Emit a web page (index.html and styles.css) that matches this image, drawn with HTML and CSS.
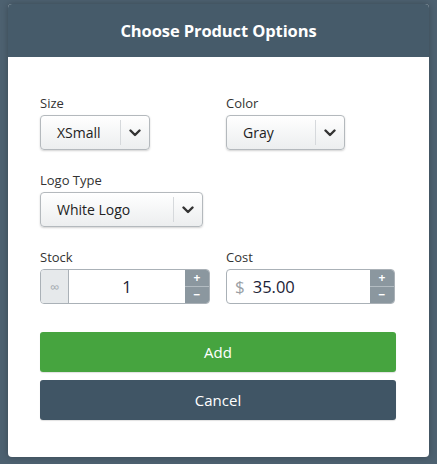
FILE: index.html
```html
<!DOCTYPE html>
<html>
<head>
<meta charset="utf-8">
<link rel="stylesheet" href="styles.css">
</head>
<body>
<div class="modal">
  <div class="modal-header">Choose Product Options</div>
  <div class="modal-body">
    <div class="row">
      <div class="field">
        <div class="label">Size</div>
        <div class="select w-size">
          <span class="select-text">XSmall</span>
          <span class="select-arrow"><svg width="12" height="8" viewBox="0 0 12 8"><polyline points="1.5,1.5 6,6 10.5,1.5" fill="none" stroke="#333" stroke-width="2.4" stroke-linecap="round" stroke-linejoin="round"/></svg></span>
        </div>
      </div>
      <div class="field">
        <div class="label">Color</div>
        <div class="select w-color">
          <span class="select-text">Gray</span>
          <span class="select-arrow"><svg width="12" height="8" viewBox="0 0 12 8"><polyline points="1.5,1.5 6,6 10.5,1.5" fill="none" stroke="#333" stroke-width="2.4" stroke-linecap="round" stroke-linejoin="round"/></svg></span>
        </div>
      </div>
    </div>
    <div class="row">
      <div class="field">
        <div class="label">Logo Type</div>
        <div class="select w-logo">
          <span class="select-text">White Logo</span>
          <span class="select-arrow"><svg width="12" height="8" viewBox="0 0 12 8"><polyline points="1.5,1.5 6,6 10.5,1.5" fill="none" stroke="#333" stroke-width="2.4" stroke-linecap="round" stroke-linejoin="round"/></svg></span>
        </div>
      </div>
    </div>
    <div class="row">
      <div class="field">
        <div class="label">Stock</div>
        <div class="numbox w-stock">
          <span class="addon">∞</span>
          <span class="num center">1</span>
          <span class="spin"><span class="spin-btn">+</span><span class="spin-btn">−</span></span>
        </div>
      </div>
      <div class="field">
        <div class="label">Cost</div>
        <div class="numbox w-cost">
          <span class="dollar">$</span>
          <span class="num">35.00</span>
          <span class="spin"><span class="spin-btn">+</span><span class="spin-btn">−</span></span>
        </div>
      </div>
    </div>
    <div class="actions">
      <div class="btn btn-add">Add</div>
      <div class="btn btn-cancel">Cancel</div>
    </div>
  </div>
</div>
</body>
</html>
```

FILE: styles.css
```css
html, body {
  margin: 0;
  padding: 0;
}
body {
  background: #4d6170;
  font-family: "Open Sans", "Liberation Sans", sans-serif;
  color: #333;
  padding: 4px 8px 7px 8px;
}
.modal {
  width: 421px;
  height: 453px;
  background: #fff;
  border-radius: 4px;
  overflow: hidden;
  box-shadow: 0 0 6px rgba(0,0,0,0.25);
  display: flex;
  flex-direction: column;
}
.modal-header {
  height: 53px;
  background: #465b6a;
  color: #fff;
  font-weight: 700;
  font-size: 16.5px;
  display: flex;
  align-items: center;
  justify-content: center;
  letter-spacing: -0.1px;
}
.modal-body {
  padding: 38px 33px 36px 32px;
  display: flex;
  flex-direction: column;
  gap: 22px;
}
.row {
  display: flex;
}
.field {
  display: flex;
  flex-direction: column;
}
.field:first-child {
  flex: 0 0 186px;
}
.field + .field {
  flex: 1 1 auto;
}
.label {
  font-size: 13px;
  line-height: 16px;
  margin-bottom: 4px;
  color: #333;
}
.select {
  box-sizing: border-box;
  height: 35px;
  border: 1px solid #b4b9bd;
  border-radius: 4px;
  background: linear-gradient(#ffffff, #eceeef);
  box-shadow: 0 1px 2px rgba(0,0,0,0.18);
  display: flex;
  align-items: center;
}
.w-size { width: 110px; }
.w-color { width: 119px; }
.w-logo { width: 163px; }
.select-text {
  flex: 1;
  padding-left: 16px;
  font-size: 14px;
  color: #222;
}
.select-arrow {
  width: 28px;
  height: 25px;
  border-left: 1px solid #d6d9dc;
  display: flex;
  align-items: center;
  justify-content: center;
}
.numbox {
  box-sizing: border-box;
  height: 35px;
  border: 1px solid #aab1b7;
  border-radius: 4px;
  overflow: hidden;
  display: flex;
  align-items: stretch;
  background: #fff;
}
.w-stock { width: 170px; }
.w-cost { width: 169px; }
.addon {
  width: 27px;
  background: #e6e9eb;
  border-right: 1px solid #aab1b7;
  color: #a5abb0;
  font-size: 13px;
  display: flex;
  align-items: center;
  justify-content: center;
}
.num {
  flex: 1;
  display: flex;
  align-items: center;
  font-size: 16.5px;
  color: #1b2236;
}
.num.center {
  justify-content: center;
}
.dollar {
  display: flex;
  align-items: center;
  padding-left: 8px;
  padding-right: 8px;
  font-size: 17px;
  color: #9aa0a5;
}
.spin {
  width: 24px;
  background: #8b979f;
  display: flex;
  flex-direction: column;
}
.spin-btn {
  flex: 1;
  color: #fff;
  font-weight: 700;
  font-size: 12px;
  line-height: 12px;
  display: flex;
  align-items: center;
  justify-content: center;
}
.spin-btn + .spin-btn {
  border-top: 1px solid #b3bcc2;
}
.actions {
  margin-top: 6px;
  display: flex;
  flex-direction: column;
  gap: 8px;
}
.btn {
  height: 40px;
  border-radius: 3px;
  display: flex;
  align-items: center;
  justify-content: center;
  color: #fff;
  font-size: 15px;
}
.btn-add {
  background: #46a43f;
  box-shadow: 0 1px 1px rgba(0,0,0,0.12);
}
.btn-cancel {
  background: #405565;
  box-shadow: 0 1px 1px rgba(0,0,0,0.12);
}
```
